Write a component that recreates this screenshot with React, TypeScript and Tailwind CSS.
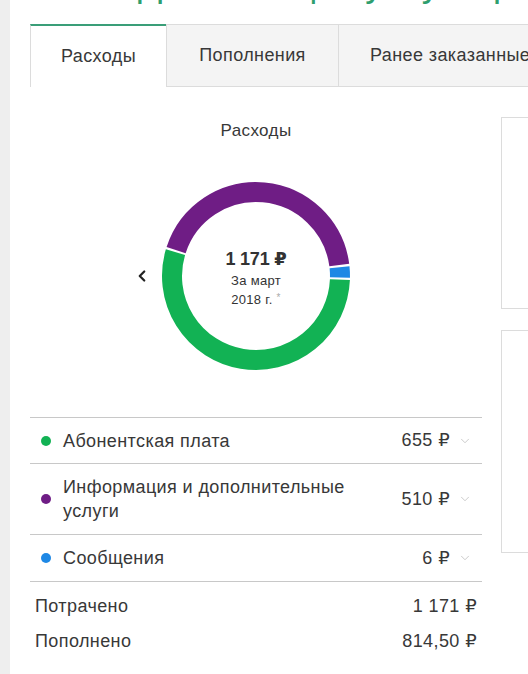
import { ChevronDown, ChevronLeft } from "lucide-react";

const segments = [
  { name: "purple", color: "#6f1d85", from: -72, to: 82.5 },
  { name: "blue", color: "#1e88e5", from: 84, to: 91 },
  { name: "green", color: "#12b254", from: 92.5, to: 286.5 },
];

const rows = [
  { color: "#12b254", label: ["Абонентская плата"], amount: "655 ₽", h: "h-[46px]" },
  { color: "#6f1d85", label: ["Информация и дополнительные", "услуги"], amount: "510 ₽", h: "h-[71px]" },
  { color: "#1e88e5", label: ["Сообщения"], amount: "6 ₽", h: "h-[47px]" },
];

function arc(cx: number, cy: number, r: number, a0: number, a1: number) {
  const p = (a: number) => {
    const rad = (a * Math.PI) / 180;
    return [cx + r * Math.sin(rad), cy - r * Math.cos(rad)];
  };
  const [x0, y0] = p(a0);
  const [x1, y1] = p(a1);
  const large = a1 - a0 > 180 ? 1 : 0;
  return `M ${x0} ${y0} A ${r} ${r} 0 ${large} 1 ${x1} ${y1}`;
}

function Donut() {
  return (
    <div className="relative h-[200px] w-[200px]">
      <svg width="200" height="200" viewBox="0 0 200 200">
        {segments.map((s) => (
          <path
            key={s.name}
            d={arc(100, 100, 84, s.from, s.to)}
            fill="none"
            stroke={s.color}
            strokeWidth={20}
          />
        ))}
      </svg>
      <div className="absolute inset-0 flex flex-col items-center justify-center pt-[6px] text-[#333]">
        <div className="text-[18px] font-bold leading-[22px] tracking-[-0.2px]">1 171 ₽</div>
        <div className="mt-[1px] text-[13px] leading-[19px] tracking-[0.3px]">За март</div>
        <div className="text-[13px] leading-[19px] tracking-[0.3px]">
          2018 г. <span className="relative -top-[3px] text-[10px] text-[#aaa]">*</span>
        </div>
      </div>
    </div>
  );
}

export default function App() {
  return (
    <div
      className="flex h-[674px] w-[528px] overflow-hidden bg-white text-[#383838]"
      style={{ fontFamily: '"Liberation Sans", "DejaVu Sans", sans-serif' }}
    >
      <div className="w-[10px] shrink-0 bg-[#eeeeee]" />
      <div className="flex min-w-0 flex-1 flex-col pl-[20px]">
        <div className="h-[24px] overflow-hidden">
          <div className="-mt-[36px] whitespace-nowrap pl-[108px] text-[36px] leading-[40px] text-[#2e9e6e]">
            Детализация услуг и расходов по номеру
          </div>
        </div>

        <div className="flex h-[63px] whitespace-nowrap text-[18px] tracking-[0.4px]">
          <div className="flex w-[136px] shrink-0 items-center justify-center border-l border-t-2 border-l-[#dcdcdc] border-t-[#3a9e78] bg-white">
            Расходы
          </div>
          <div className="flex w-[173px] shrink-0 items-center justify-center border border-[#dcdcdc] bg-[#f4f4f4]">
            Пополнения
          </div>
          <div className="flex w-[200px] shrink-0 items-center border border-l-0 border-[#dcdcdc] bg-[#f4f4f4] pl-[31px]">
            Ранее заказанные
          </div>
        </div>

        <div className="flex gap-[19px]">
          <div className="flex w-[452px] shrink-0 flex-col">
            <div className="mt-[34px] text-center text-[17px] leading-[20px] tracking-[0.4px]">Расходы</div>
            <div className="mt-[35px] flex items-center justify-center">
              <div className="flex w-[24px] justify-start pl-[1px]">
                <ChevronLeft className="h-[18px] w-[18px] text-[#222]" strokeWidth={3} />
              </div>
              <Donut />
              <div className="w-[24px]" />
            </div>

            <div className="mt-[41px] border-t border-[#c8c8c8]">
              {rows.map((r) => (
                <div
                  key={r.amount}
                  className={`flex items-center border-b border-[#c8c8c8] pl-[11px] pr-[10px] tracking-[0.4px] ${r.h}`}
                >
                  <span
                    className="h-[10px] w-[10px] shrink-0 rounded-full"
                    style={{ backgroundColor: r.color }}
                  />
                  <div className="ml-[12px] flex-1 text-[18px] leading-[24px]">
                    {r.label.map((l) => (
                      <div key={l}>{l}</div>
                    ))}
                  </div>
                  <div className="text-[18px]">{r.amount}</div>
                  <ChevronDown className="ml-[8px] h-[14px] w-[14px] text-[#b5b5b5]" strokeWidth={1.2} />
                </div>
              ))}
            </div>

            <div className="flex flex-col px-[5px] pt-[12px] text-[18px] leading-[24px] tracking-[0.4px]">
              <div className="flex justify-between">
                <span>Потрачено</span>
                <span>1 171 ₽</span>
              </div>
              <div className="mt-[11px] flex justify-between">
                <span>Пополнено</span>
                <span>814,50 ₽</span>
              </div>
            </div>
          </div>

          <div className="flex flex-1 flex-col pt-[30px]">
            <div className="h-[192px] border border-r-0 border-[#dcdcdc]" />
            <div className="mt-[21px] h-[223px] border border-r-0 border-[#dcdcdc]" />
          </div>
        </div>
      </div>
    </div>
  );
}
